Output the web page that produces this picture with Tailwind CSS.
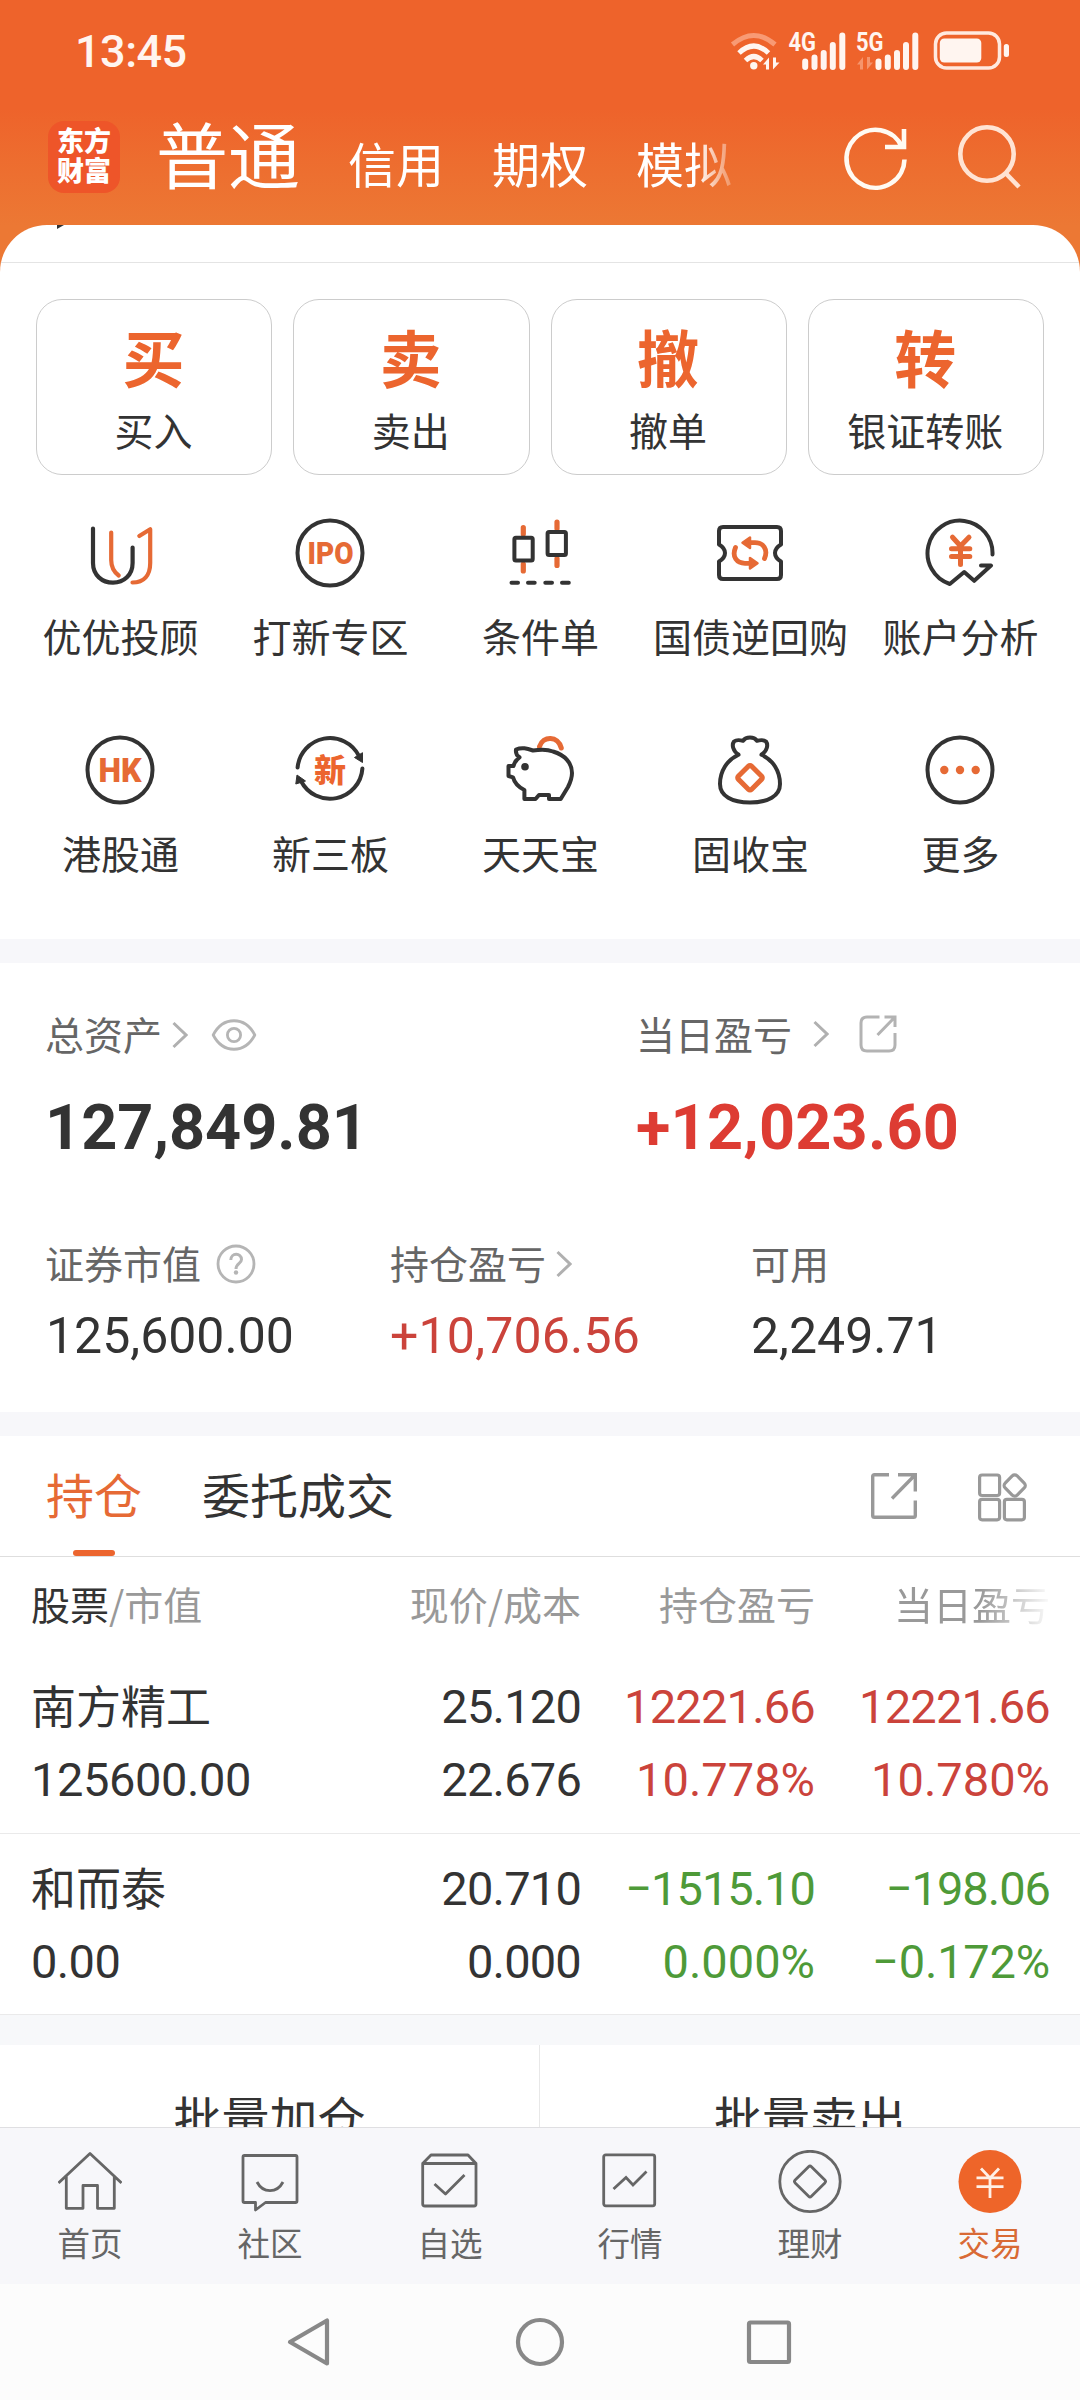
<!DOCTYPE html>
<html lang="zh-CN">
<head>
<meta charset="utf-8">
<title>交易</title>
<script src="https://cdn.jsdelivr.net/npm/@tailwindcss/browser@4"></script>
</head>
<body class="w-[1080px] h-[2400px] overflow-hidden bg-white text-[#333] font-['Noto_Sans_CJK_SC',sans-serif]">
<div class="flex flex-col w-[1080px] h-[2400px]">

  <header class="h-[272px] shrink-0 bg-linear-to-b from-[#ee632b] from-40% to-[#ec7834] to-83% text-white">
    <div class="flex h-[102px] items-center justify-between pl-[75px] pr-[70px]">
      <span class="font-['Roboto',sans-serif] font-medium text-[45px] leading-[50px] pt-[2px] tracking-[-0.5px] text-[#fff5f0]">13:45</span>
      <svg class="w-[280px] h-[40px]" viewBox="730 31 280 40" fill="none" stroke-linecap="butt">
        <path d="M732.500 44.500Q753.800 26.500 775 44.500" stroke="#f89a74" stroke-width="5"/>
        <path d="M739 53Q753.800 39 768.500 53M745.500 60.500Q753.800 52.500 762 60.500" stroke="#fff5f0" stroke-width="5"/>
        <circle cx="753.800" cy="65.800" r="3.700" fill="#fff5f0"/>
        <path d="M763 64.500L769 57.500V69.500H766V64.500ZM779.500 62.500L773 69.500V57.500H776V62.500Z" fill="#fff5f0"/>
        <g fill="#fff5f0" font-family="Roboto" font-weight="700" font-size="26">
          <text x="788.500" y="51" textLength="27.500" lengthAdjust="spacingAndGlyphs">4G</text>
          <text x="856" y="51" textLength="27.500" lengthAdjust="spacingAndGlyphs">5G</text>
        </g>
        <g stroke="#fff5f0" stroke-width="6" stroke-linecap="round">
          <path d="M805.200 61.500V67M814.500 57.500V67M823.700 53V67M832.800 45V67M842.300 35.500V67"/>
          <path d="M878.500 61.500V67M887.800 57.500V67M897 53V67M906 45V67M915.300 35.500V67"/>
        </g>
        <path d="M857 64.500L863 57V69.500H860V64.500ZM873 62.500L867 69.500V57H870V62.500Z" fill="#f5946c"/>
        <rect x="935.500" y="33" width="64" height="35" rx="11" stroke="#ffe9df" stroke-width="3.500"/>
        <rect x="939.800" y="38.500" width="41.500" height="24" rx="4.500" fill="#fff5f0"/>
        <rect x="1003.800" y="44" width="5.200" height="13" rx="2.500" fill="#fff5f0"/>
      </svg>
    </div>
    <div class="flex items-start pl-12">
      <div class="mt-[19px] flex size-[72px] flex-col items-center rounded-2xl bg-[#ee5529] pt-[4px] text-[27px] font-black leading-[30px]">
        <span>东方</span><span>财富</span>
      </div>
      <nav class="ml-[36px] mt-[14px] flex w-[580px] items-baseline gap-12 text-[48px] leading-[72px] [mask-image:linear-gradient(to_right,#000_540px,transparent_588px)]">
        <span class="text-[72px]">普通</span><span>信用</span><span>期权</span><span>模拟</span>
      </nav>
      <svg class="ml-[104px] mt-[18px] size-[72px]" viewBox="840 120 72 72" fill="none" stroke="#fffaf2" stroke-width="4.600">
        <path d="M904.500 159.500A29 29 0 1 1 902 147M904 129V147H885"/>
      </svg>
      <svg class="ml-[39px] mt-[18px] size-[72px]" viewBox="951 120 72 72" fill="none" stroke="#ffe3d3" stroke-width="4.600">
        <circle cx="987" cy="154" r="26.700"/><path d="M1005.500 173L1019 187"/>
      </svg>
    </div>
  </header>

  <main class="relative -mt-[47px] flex shrink-0 flex-col h-[1902px] overflow-hidden rounded-t-[47px] bg-white">
    <section class="shrink-0">
      <div class="h-[37px] pl-[57px]">
        <svg class="w-[7px] h-[4px]" viewBox="0 0 7 4"><path d="M0 0H7L0 4Z" fill="#333"/></svg>
      </div>
      <div class="grid grid-cols-4 gap-[21px] border-t border-[#e4e4e4] px-9 pt-9 text-center">
        <div class="h-[176px] rounded-[26px] border border-[#ccc] pt-[18px] pr-px"><div class="text-[62px] font-bold leading-[76px] text-[#ec652e]">买</div><div class="mt-[9px] text-[39px] leading-[52px]">买入</div></div>
        <div class="h-[176px] rounded-[26px] border border-[#ccc] pt-[18px] pr-px"><div class="text-[62px] font-bold leading-[76px] text-[#ec652e]">卖</div><div class="mt-[9px] text-[39px] leading-[52px]">卖出</div></div>
        <div class="h-[176px] rounded-[26px] border border-[#ccc] pt-[18px] pr-px"><div class="text-[62px] font-bold leading-[76px] text-[#ec652e]">撤</div><div class="mt-[9px] text-[39px] leading-[52px]">撤单</div></div>
        <div class="h-[176px] rounded-[26px] border border-[#ccc] pt-[18px] pr-px"><div class="text-[62px] font-bold leading-[76px] text-[#ec652e]">转</div><div class="mt-[9px] text-[39px] leading-[52px]">银证转账</div></div>
      </div>
      <div class="grid grid-cols-5 gap-y-[73px] px-[15px] pt-[42px] pb-[61px] text-[39px] leading-[52px]">
        <div class="flex flex-col items-center gap-5">
          <svg class="size-[72px]" viewBox="0 0 72 72" fill="none" stroke-width="4.200" stroke-linecap="round" stroke-linejoin="round">
            <path d="M9 11.500V46C9 58 18 65.700 29 65.700S48.600 58 48.600 46V30.500" stroke="#333"/>
            <path d="M27.200 15.500V43C27.200 50 30 55 34.700 58.500M55.300 19L66.200 12.300V46C66.200 58 60 65.500 48.500 65.500" stroke="#e66a35"/>
          </svg><span class="pl-px">优优投顾</span></div>
        <div class="flex flex-col items-center gap-5">
          <svg class="size-[72px]" viewBox="0 0 72 72"><circle cx="36" cy="36" r="32.500" fill="none" stroke="#333" stroke-width="4"/>
            <text x="13.500" y="47" font-family="Roboto" font-weight="900" font-size="32" textLength="46" lengthAdjust="spacingAndGlyphs" fill="#e66a35">IPO</text></svg><span class="pl-px">打新专区</span></div>
        <div class="flex flex-col items-center gap-5">
          <svg class="size-[72px]" viewBox="0 0 72 72" fill="none" stroke-linecap="round" stroke-linejoin="round">
            <path d="M19.300 10.500V17M19.300 47V54M53 5V11.500M53 41.500V48.500" stroke="#e66a35" stroke-width="5.200"/>
            <g stroke="#333" stroke-width="4"><rect x="10.400" y="20.700" width="18.300" height="22.800" rx="1.500"/><rect x="43.600" y="15" width="18.300" height="23" rx="1.500"/>
            <path d="M7.500 65.700H14M24 65.700H30.700M41.300 65.700H48M58 65.700H64.800"/></g>
          </svg><span class="pl-px">条件单</span></div>
        <div class="flex flex-col items-center gap-5">
          <svg class="size-[72px]" viewBox="0 0 72 72" fill="none" stroke-width="4" stroke-linecap="round" stroke-linejoin="round">
            <path d="M9 10H63Q67 10 67 14V27.500Q61 31 61 36T67 44.500V58Q67 62 63 62H9Q5 62 5 58V44.500Q11 41 11 36T5 27.500V14Q5 10 9 10Z" stroke="#333"/>
            <path d="M50.500 41.500C54.500 32 49 25.700 41 25.700H34M21.500 30.500C17.500 40 23 46.300 31 46.300H38" stroke="#e66a35" stroke-width="4.800"/>
            <path d="M28.500 25.700L36 20.500V31ZM43.500 46.300L36 41V51.500Z" fill="#e66a35" stroke="#e66a35" stroke-width="2.500"/>
          </svg><span class="whitespace-nowrap pl-px">国债逆回购</span></div>
        <div class="flex flex-col items-center gap-5">
          <svg class="size-[72px]" viewBox="0 0 72 72" fill="none" stroke-width="4" stroke-linecap="butt" stroke-linejoin="miter">
            <path d="M68.500 37.500A32.500 32.500 0 1 0 25.800 67L40.200 55L50.200 63.800L67 48.500H57" stroke="#333" stroke-linejoin="round" stroke-linecap="round"/>
            <path d="M28.500 20.200L36.500 29L45 20.200M36.500 29V47.500M27.500 31.800H45.800M27.500 39.500H45.800" stroke="#e66a35" stroke-width="5" stroke-linecap="round" stroke-linejoin="round"/>
          </svg><span class="pl-px">账户分析</span></div>
        <div class="flex flex-col items-center gap-5">
          <svg class="size-[72px]" viewBox="0 0 72 72"><circle cx="36" cy="36" r="32.500" fill="none" stroke="#333" stroke-width="4"/>
            <text x="14.500" y="47.500" font-family="Roboto" font-weight="900" font-size="33" textLength="43" lengthAdjust="spacingAndGlyphs" fill="#e66a35">HK</text></svg><span class="pl-px">港股通</span></div>
        <div class="flex flex-col items-center gap-5">
          <svg class="size-[72px]" viewBox="0 0 72 72" fill="none"><path d="M3.600 33.500A32.500 32.500 0 0 1 65 22M68.400 34.500A32.500 32.500 0 0 1 7 47" stroke="#333" stroke-width="4" stroke-linecap="round"/>
            <path d="M60.500 23.500L68.500 18.700L68.500 28.500ZM3 41L11.500 47L1.800 50Z" fill="#333" stroke="#333" stroke-linejoin="round"/>
            <text x="20" y="47.500" font-family="Noto Sans CJK SC" font-weight="900" font-size="32" fill="#ec652e">新</text></svg><span class="pl-px">新三板</span></div>
        <div class="flex flex-col items-center gap-5">
          <svg class="size-[72px]" viewBox="0 0 72 72" fill="none" stroke-width="4" stroke-linejoin="round" stroke-linecap="round">
            <path d="M35.500 12.500C39 1.500 54 1.500 57.300 14" stroke="#e66a35" stroke-width="5"/>
            <path d="M12 15.500C18 13 23 14.500 29 16.500C36 15.500 44 15.500 49 17.500C61 21 68 29 68 39C68 44 66 49 64 53L56.700 65H45V61H35L31.500 65H20.400V56C14 53 10.500 49 9 43.300L4.500 42V32H9.500C10.500 28 12.500 25.500 15.500 23.300C12.500 21.500 11.500 19 12 15.500Z" stroke="#333"/>
            <circle cx="21" cy="32.700" r="3.800" fill="#333"/>
          </svg><span class="pl-px">天天宝</span></div>
        <div class="flex flex-col items-center gap-5">
          <svg class="size-[72px]" viewBox="0 0 72 72" fill="none" stroke-width="4" stroke-linejoin="round" stroke-linecap="round">
            <path d="M24.500 20.700C19 17 17.500 11 20 7.500C22.500 5.500 26 6 29 6.800C32 2.500 40 2.500 43 6.800C46 6 49.500 5.500 52 7.500C54.500 11 53 17 47.500 20.700M24.500 20.700C13 26 6 37 6 50C6 62 18 68.500 36 68.500S66 62 66 50C66 37 59 26 47.500 20.700" stroke="#333"/>
            <rect x="26.700" y="34.400" width="18.600" height="18.600" rx="2" transform="rotate(45 36 43.700)" stroke="#e66a35" stroke-width="5"/>
          </svg><span class="pl-px">固收宝</span></div>
        <div class="flex flex-col items-center gap-5">
          <svg class="size-[72px]" viewBox="0 0 72 72"><circle cx="36" cy="36" r="32.500" fill="none" stroke="#333" stroke-width="4"/>
            <g fill="#e66a35"><circle cx="20.300" cy="36" r="4.200"/><circle cx="36" cy="36" r="4.200"/><circle cx="51.700" cy="36" r="4.200"/></g></svg><span class="pl-px">更多</span></div>
      </div>
    </section>

    <div class="h-6 shrink-0 bg-[#f7f7fa]"></div>

    <section class="h-[449px] shrink-0 pl-[45px] pt-[44px]">
      <div class="flex">
        <div class="w-[591px]">
          <div class="flex items-center text-[39px] leading-[52px] text-[#666]">总资产
            <svg class="ml-[10px] mt-1 w-[16px] h-[28px]" viewBox="0 0 16 28" fill="none" stroke="#b0b0b0" stroke-width="3"><path d="M1.500 2L14 14L1.500 26"/></svg>
            <svg class="ml-[23px] mt-1 w-[46px] h-[32px]" viewBox="0 0 46 32" fill="none" stroke="#b5b5b5" stroke-width="2.800" stroke-linejoin="round"><path d="M2.200 16C12 -3 34 -3 43.800 16C34 35 12 35 2.200 16Z"/><circle cx="23" cy="16" r="6.600"/></svg>
          </div>
          <div class="mt-[33px] font-['Roboto',sans-serif] text-[63px] font-bold leading-[72px]">127,849.81</div>
        </div>
        <div>
          <div class="flex items-center text-[39px] leading-[52px] text-[#666]">当日盈亏
            <svg class="ml-[21px] mt-0.5 w-[16px] h-[28px]" viewBox="0 0 16 28" fill="none" stroke="#b0b0b0" stroke-width="3"><path d="M1.500 2L14 14L1.500 26"/></svg>
            <svg class="ml-[29px] mt-0.5 w-[40px] h-[40px]" viewBox="0 0 40 40" fill="none" stroke="#b3b3b3" stroke-width="3"><path d="M21.500 3H9Q3 3 3 9V31Q3 37 9 37H31Q37 37 37 31V19M26.500 3H37V13M37 3L19.500 21"/></svg>
          </div>
          <div class="mt-[33px] font-['Roboto',sans-serif] text-[63px] font-bold leading-[72px] tracking-[0.2px] text-[#dd3c33]">+12,023.60</div>
        </div>
      </div>
      <div class="mt-[72px] flex">
        <div class="w-[345px]">
          <div class="flex items-center text-[39px] leading-[52px] text-[#666]">证券市值
            <svg class="ml-[15px] mt-1 size-[40px]" viewBox="0 0 40 40" fill="none" stroke="#b5b5b5" stroke-width="2.800"><circle cx="20" cy="20" r="18"/><path d="M14.800 16C14.800 8.500 25.500 8.500 25.500 15.500C25.500 19.500 20 19.500 20 25" stroke-width="3"/><circle cx="20" cy="28.500" r="2.200" fill="#b5b5b5" stroke="none"/></svg>
          </div>
          <div class="mt-[18px] font-['Roboto',sans-serif] text-[50px] leading-[60px] pl-px">125,600.00</div>
        </div>
        <div class="w-[361px]">
          <div class="flex items-center text-[39px] leading-[52px] text-[#666]">持仓盈亏
            <svg class="ml-[10px] mt-1 w-[16px] h-[28px]" viewBox="0 0 16 28" fill="none" stroke="#b0b0b0" stroke-width="3"><path d="M1.500 2L14 14L1.500 26"/></svg>
          </div>
          <div class="mt-[18px] font-['Roboto',sans-serif] text-[50px] leading-[60px] tracking-[0.2px] text-[#cb433b]">+10,706.56</div>
        </div>
        <div>
          <div class="text-[39px] leading-[52px] text-[#666]">可用</div>
          <div class="mt-[18px] font-['Roboto',sans-serif] text-[50px] leading-[60px]">2,249.71</div>
        </div>
      </div>
    </section>

    <div class="h-6 shrink-0 bg-[#f7f7fa]"></div>

    <section class="shrink-0">
      <div class="flex h-[121px] items-start border-b border-[#dedede] pl-[46px] pt-[21px] text-[48px] leading-[72px]">
        <div class="flex flex-col items-center gap-[21px] text-[#e66a35]">持仓<i class="h-[6px] w-[42px] rounded-full bg-[#ec652e]"></i></div>
        <div class="ml-[60px]">委托成交</div>
        <svg class="ml-[476px] mt-[15px] size-[48px]" viewBox="0 0 48 48" fill="none" stroke="#999" stroke-width="3.400"><path d="M19 2.700H4.500Q2.700 2.700 2.700 4.500V43.500Q2.700 45.300 4.500 45.300H43.500Q45.300 45.300 45.300 43.500V28.500M28 2.700H45.300V19.500M45.300 2.700L22 26.500"/></svg>
        <svg class="ml-[59px] mt-[15px] size-[50px]" viewBox="0 0 50 50" fill="none" stroke="#999" stroke-width="3.200"><rect x="2.600" y="3" width="20" height="20.500" rx="2.500"/><rect x="2.600" y="27.300" width="20" height="20.500" rx="2.500"/><rect x="27.400" y="27.300" width="20" height="20.500" rx="2.500"/><rect x="29.200" y="5" width="17" height="17" rx="3.500" transform="rotate(45 37.700 13.500)"/></svg>
      </div>
      <div class="grid h-[95px] grid-cols-[280px_270px_234px_235px] pl-[31px] text-right text-[39px] leading-[92px] text-[#999]">
        <div class="text-left"><span class="text-[#333]">股票</span>/市值</div>
        <div>现价/成本</div>
        <div>持仓盈亏</div>
        <div class="[mask-image:linear-gradient(to_right,#000_165px,rgba(0,0,0,0.08)_232px)]">当日盈亏</div>
      </div>
      <div class="grid h-[182px] grid-cols-[280px_270px_234px_235px] border-b border-[#eaeaea] pl-[31px] pt-[18px] text-right font-['Roboto',sans-serif] text-[47px] leading-[73px]">
        <div class="text-left"><div class="h-[73px] font-['Noto_Sans_CJK_SC',sans-serif] text-[45px] leading-[69px]">南方精工</div><div class="tracking-[-0.4px]">125600.00</div></div>
        <div class="tracking-[-0.8px]"><div>25.120</div><div>22.676</div></div>
        <div class="text-[#cb433b]"><div class="tracking-[-0.8px]">12221.66</div><div>10.778%</div></div>
        <div class="text-[#cb433b]"><div class="tracking-[-0.8px]">12221.66</div><div>10.780%</div></div>
      </div>
      <div class="grid h-[181px] grid-cols-[280px_270px_234px_235px] border-b border-[#eaeaea] pl-[31px] pt-[18px] text-right font-['Roboto',sans-serif] text-[47px] leading-[73px]">
        <div class="text-left"><div class="h-[73px] font-['Noto_Sans_CJK_SC',sans-serif] text-[45px] leading-[69px]">和而泰</div><div class="tracking-[-0.6px]">0.00</div></div>
        <div class="tracking-[-0.8px]"><div>20.710</div><div>0.000</div></div>
        <div class="text-[#4e9a38]"><div class="tracking-[-1px]">−1515.10</div><div>0.000%</div></div>
        <div class="text-[#4e9a38]"><div class="tracking-[-1px]">−198.06</div><div class="tracking-[-0.2px]">−0.172%</div></div>
      </div>
    </section>

    <div class="h-[30px] shrink-0 bg-[#f7f8fa]"></div>
    <div class="flex h-[82px] shrink-0 overflow-hidden text-center text-[48px] leading-[142px]">
      <div class="w-[540px] border-r border-[#e8e8e8]">批量加仓</div>
      <div class="w-[540px]">批量卖出</div>
    </div>
  </main>

  <nav class="grid h-[157px] shrink-0 grid-cols-6 border-t border-[#dfdfe2] bg-[#f7f7fa] pt-[22px] text-[32.500px] leading-[49px] text-[#666]">
    <div class="flex flex-col items-center gap-[3px]">
      <svg class="size-[64px]" viewBox="0 0 64 64" fill="none" stroke="#666" stroke-width="2.800" stroke-linejoin="round"><path d="M.5 33L32 3.500L63.500 33M8.300 26V58.300H25V35.500H39.500V58.300H56.300V26"/></svg>首页</div>
    <div class="flex flex-col items-center gap-[3px]">
      <svg class="size-[64px]" viewBox="0 0 64 64" fill="none" stroke="#666" stroke-width="2.800" stroke-linejoin="round"><path d="M6.500 5.500H57.500Q59 5.500 59 7V51Q59 52.500 57.500 52.500H27.500L17.500 60V52.500H6.500Q5 52.500 5 51V7Q5 5.500 6.500 5.500Z"/><path d="M19 32C25 43.500 39 43.500 45 32"/></svg>社区</div>
    <div class="flex flex-col items-center gap-[3px]">
      <svg class="size-[64px]" viewBox="0 0 64 64" fill="none" stroke="#666" stroke-width="2.800" stroke-linejoin="round"><path d="M4.700 13.500L13 5H50L58 13.500M4.700 13.500V54Q4.700 56 7 56H56Q58 56 58 54V13.500Z"/><path d="M16.500 34L27.500 44L46.500 25"/></svg>自选</div>
    <div class="flex flex-col items-center gap-[3px]">
      <svg class="size-[64px]" viewBox="0 0 64 64" fill="none" stroke="#666" stroke-width="2.800"><rect x="5.700" y="4.800" width="51" height="51" rx="2"/><path d="M15.500 39L28 27.500L35 35L48.500 21.500"/></svg>行情</div>
    <div class="flex flex-col items-center gap-[3px]">
      <svg class="size-[64px]" viewBox="0 0 64 64" fill="none" stroke="#666" stroke-width="2.800"><circle cx="32" cy="31.500" r="30.200"/><rect x="20.500" y="20" width="23" height="23" rx="2" transform="rotate(45 32 31.500)"/></svg>理财</div>
    <div class="flex flex-col items-center gap-[3px] text-[#d96a35]">
      <svg class="size-[64px]" viewBox="0 0 64 64" fill="none" stroke="#fff0e6" stroke-width="2.800"><circle cx="32" cy="31.500" r="31.500" fill="#ee6529" stroke="none"/><path d="M23 18.500L32 28L41 18.500M32 28V48M18.500 27.800H45.500M18.500 36.700H45.500"/></svg>交易</div>
  </nav>

  <div class="flex h-[116px] shrink-0 items-center justify-center bg-[#fcfcfc]">
    <svg class="w-[520px] h-[52px]" viewBox="280 2316 520 52" fill="none" stroke="#888" stroke-width="4.200" stroke-linejoin="round">
      <path d="M290 2342L327 2320.500V2363.500Z"/><circle cx="540" cy="2342" r="22"/><rect x="749" y="2322.500" width="40" height="39.500" rx="1.500"/>
    </svg>
  </div>
</div>
</body>
</html>
